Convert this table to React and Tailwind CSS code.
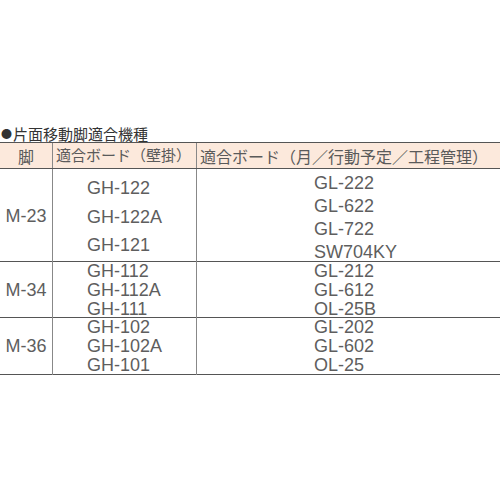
export default function App() {
  const rows = [
    {
      leg: "M-23",
      h: "h-[93px]",
      wall: ["GH-122", "GH-122A", "GH-121"],
      wallCls: "pt-[5px] leading-[28.5px]",
      other: ["GL-222", "GL-622", "GL-722", "SW704KY"],
      otherCls: "pt-[3px] leading-[23px]",
    },
    {
      leg: "M-34",
      h: "h-[56px]",
      wall: ["GH-112", "GH-112A", "GH-111"],
      wallCls: "leading-[19px]",
      other: ["GL-212", "GL-612", "OL-25B"],
      otherCls: "leading-[19px]",
    },
    {
      leg: "M-36",
      h: "h-[57px]",
      wall: ["GH-102", "GH-102A", "GH-101"],
      wallCls: "leading-[19px]",
      other: ["GL-202", "GL-602", "OL-25"],
      otherCls: "leading-[19px]",
    },
  ];
  const jp = { fontFamily: '"Noto Sans CJK JP", "Noto Sans", sans-serif' };
  const lat = { fontFamily: '"Liberation Sans", Arial, sans-serif' };
  return (
    <div className="w-[500px] h-[500px] bg-white pt-[125px]">
      <div className="h-[17px] leading-[17px] text-[15px] text-[#333] pl-[1px] flex items-center" style={jp}>
        <span className="text-[11px] mr-[1px]">●</span>片面移動脚適合機種
      </div>
      <div className="grid grid-cols-[53px_144px_1fr] h-[27px] bg-[#fce9dc] border-t-[1.5px] border-b-[1.5px] border-[#555] text-[16px] text-[#5a5a5a]" style={jp}>
        <div className="flex items-center justify-center border-r-[1.5px] border-[#888]">脚</div>
        <div className="flex items-center pl-[3px] border-r-[1.5px] border-[#888] whitespace-nowrap text-[15px]">適合ボード（壁掛）</div>
        <div className="flex items-center pl-[3px] whitespace-nowrap">適合ボード（月／行動予定／工程管理）</div>
      </div>
      {rows.map((r) => (
        <div key={r.leg} className={`grid grid-cols-[53px_144px_1fr] ${r.h} border-b-[1.5px] border-[#555] text-[18px] text-[#5e5e5e]`} style={lat}>
          <div className="flex items-center justify-center border-r-[1.5px] border-[#888]">{r.leg}</div>
          <div className={`pl-[34px] border-r-[1.5px] border-[#888] ${r.wallCls}`}>
            {r.wall.map((t) => (
              <div key={t}>{t}</div>
            ))}
          </div>
          <div className={`pl-[117px] ${r.otherCls}`}>
            {r.other.map((t) => (
              <div key={t}>{t}</div>
            ))}
          </div>
        </div>
      ))}
    </div>
  );
}
